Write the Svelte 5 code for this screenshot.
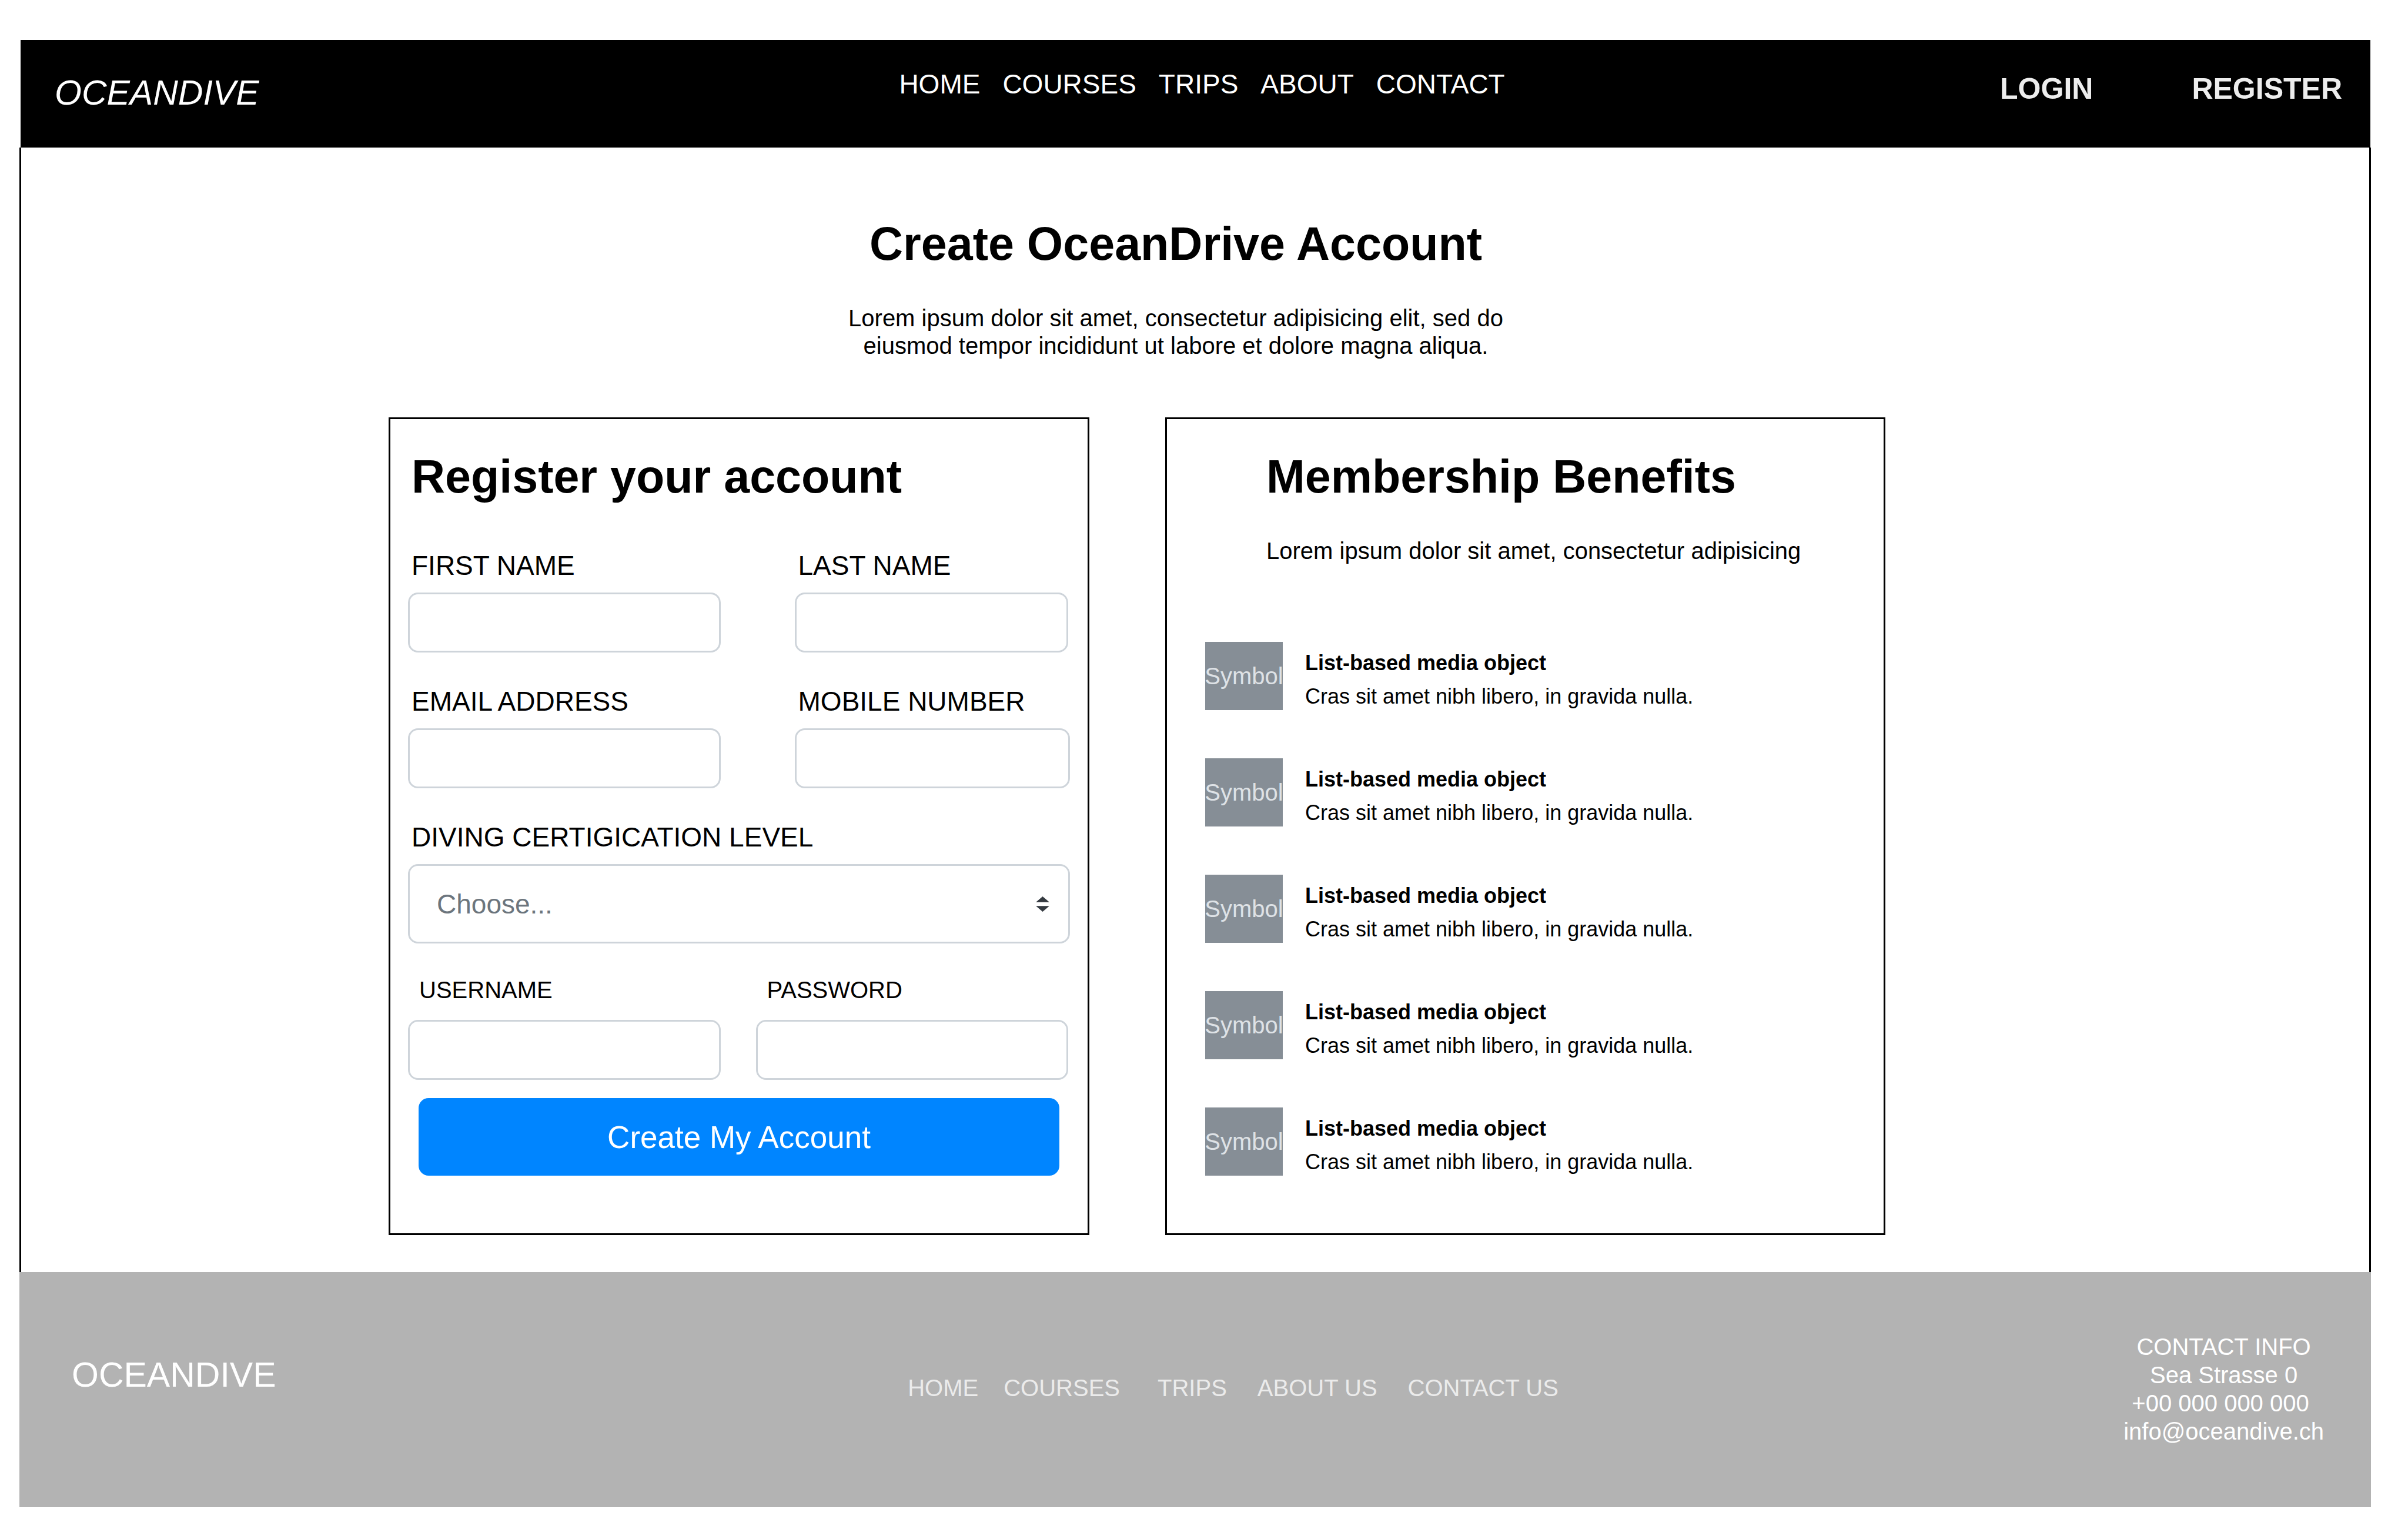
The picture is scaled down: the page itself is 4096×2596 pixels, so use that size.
<script>
  const mainLinks = ['HOME', 'COURSES', 'TRIPS', 'ABOUT', 'CONTACT'];
  const footerLinks = ['HOME', 'COURSES', 'TRIPS', 'ABOUT US', 'CONTACT US'];
  const benefits = Array.from({ length: 5 }, (_, id) => ({
    id,
    title: 'List-based media object',
    text: 'Cras sit amet nibh libero, in gravida nulla.'
  }));
</script>

<div class="page">
  <header class="header">
    <a class="logo logo-italic" href="#home">OCEANDIVE</a>
    <nav class="main-nav" aria-label="Main">
      {#each mainLinks as link}
        <a href="#{link.toLowerCase()}">{link}</a>
      {/each}
    </nav>
    <div class="auth">
      <a href="#login">LOGIN</a>
      <a href="#register">REGISTER</a>
    </div>
  </header>

  <main class="main">
    <section class="hero">
      <h1>Create OceanDrive Account</h1>
      <p>Lorem ipsum dolor sit amet, consectetur adipisicing elit, sed do eiusmod tempor incididunt ut labore et dolore magna aliqua.</p>
    </section>

    <div class="cards">
      <section class="card register" id="register">
        <h2>Register your account</h2>
        <form onsubmit={(event) => event.preventDefault()}>
          <div class="row row-name">
            <div class="field">
              <label for="first-name">FIRST NAME</label>
              <input id="first-name" type="text" />
            </div>
            <div class="field">
              <label for="last-name">LAST NAME</label>
              <input id="last-name" type="text" />
            </div>
          </div>
          <div class="row row-contact">
            <div class="field">
              <label for="email">EMAIL ADDRESS</label>
              <input id="email" type="email" />
            </div>
            <div class="field">
              <label for="mobile">MOBILE NUMBER</label>
              <input id="mobile" type="tel" />
            </div>
          </div>
          <div class="field">
            <label for="level">DIVING CERTIGICATION LEVEL</label>
            <div class="select">
              <select id="level">
                <option>Choose...</option>
              </select>
              <svg viewBox="0 0 28 32" aria-hidden="true">
                <path d="M0 12 14 0 28 12ZM0 20H28L14 32Z" />
              </svg>
            </div>
          </div>
          <div class="row row-login">
            <div class="field compact">
              <label for="username">USERNAME</label>
              <input id="username" type="text" />
            </div>
            <div class="field compact">
              <label for="password">PASSWORD</label>
              <input id="password" type="password" />
            </div>
          </div>
          <button type="submit">Create My Account</button>
        </form>
      </section>

      <section class="card benefits">
        <div class="intro">
          <h2>Membership Benefits</h2>
          <p>Lorem ipsum dolor sit amet, consectetur adipisicing</p>
        </div>
        <ul>
          {#each benefits as benefit (benefit.id)}
            <li>
              <div class="symbol">Symbol</div>
              <div class="body">
                <h3>{benefit.title}</h3>
                <p>{benefit.text}</p>
              </div>
            </li>
          {/each}
        </ul>
      </section>
    </div>
  </main>

  <footer class="footer">
    <a class="logo" href="#home">OCEANDIVE</a>
    <nav class="footer-nav" aria-label="Footer">
      {#each footerLinks as link}
        <a href="#{link.toLowerCase().replace(' ', '-')}">{link}</a>
      {/each}
    </nav>
    <address>
      <span>CONTACT INFO</span>
      <span>Sea Strasse 0</span>
      <span>+00 000 000 000&nbsp;</span>
      <a href="mailto:info@oceandive.ch">info@oceandive.ch</a>
    </address>
  </footer>
</div>

<style>
  :global(body) {
    margin: 0;
    background: #fff;
  }

  .page,
  .page * {
    box-sizing: border-box;
  }

  .page {
    padding: 68px 63px 33px 33px;
    font-family: 'Liberation Sans', Arial, sans-serif;
    font-size: 40px;
    line-height: 47px;
    color: #000;
  }

  h1,
  h2,
  h3,
  p,
  ul {
    margin: 0;
    padding: 0;
    font-size: inherit;
  }

  a {
    color: inherit;
    text-decoration: none;
    white-space: nowrap;
  }

  h1,
  h2 {
    font-size: 79px;
    line-height: 90px;
  }

  .logo {
    font-size: 59px;
    line-height: 68px;
  }

  .logo-italic {
    font-style: italic;
  }

  /* Header */
  .header {
    display: grid;
    grid-template-columns: 1489fr auto 1467fr;
    align-items: start;
    min-height: 183px;
    margin: 0 1px 0 2px;
    background: #000;
    color: #fff;
  }

  .header .logo {
    padding: 56px 0 0 58px;
  }

  .main-nav {
    display: flex;
    gap: 38px;
    padding-top: 48px;
    font-size: 46px;
    line-height: 54px;
  }

  .auth {
    display: flex;
    justify-content: flex-end;
    gap: 168px;
    padding: 54px 48px 0 0;
    font-size: 50px;
    line-height: 58px;
    font-weight: bold;
    color: #ededed;
  }

  /* Main */
  .main {
    padding: 119px 0 63px;
    border: solid #000;
    border-width: 0 3px;
  }

  .hero {
    display: flex;
    flex-direction: column;
    align-items: center;
    gap: 58px;
    padding-right: 66px;
    text-align: center;
  }

  .hero p {
    max-width: 1160px;
  }

  .cards {
    display: grid;
    grid-template-columns: 1192fr 1225fr;
    gap: 129px;
    margin-top: 98px;
    padding: 0 823px 0 625px;
  }

  .card {
    padding: 53px 30px 98px;
    border: 3px solid #000;
  }

  /* Registration form */
  .register h2 {
    padding-left: 6px;
  }

  form {
    display: flex;
    flex-direction: column;
    gap: 56px;
    margin-top: 79px;
  }

  .row {
    display: grid;
    column-gap: 126px;
  }

  .row-name {
    grid-template-columns: 531fr 465fr;
    padding-right: 3px;
  }

  .row-contact {
    grid-template-columns: 531fr 468fr;
  }

  .row-login {
    grid-template-columns: 1fr 1fr;
    column-gap: 60px;
    padding-right: 3px;
  }

  .field {
    display: flex;
    flex-direction: column;
    gap: 19px;
    min-width: 0;
    font-size: 46px;
    line-height: 54px;
  }

  .field label {
    padding-left: 6px;
  }

  .compact {
    gap: 27px;
    font-size: 40px;
    line-height: 47px;
  }

  .compact label {
    padding-left: 19px;
  }

  input,
  select {
    width: 100%;
    height: 102px;
    margin: 0;
    padding: 0 46px;
    border: 3px solid #ced4da;
    border-radius: 17px;
    background: #fff;
    font: inherit;
    color: #6c757d;
  }

  .select {
    display: grid;
    align-items: center;
  }

  select {
    grid-area: 1 / 1;
    height: 135px;
    appearance: none;
  }

  .select svg {
    grid-area: 1 / 1;
    justify-self: end;
    width: 23px;
    height: 26px;
    margin-right: 35px;
    fill: #343a40;
    pointer-events: none;
  }

  button {
    height: 132px;
    margin: -25px 18px 0;
    border: 0;
    border-radius: 17px;
    background: #0085ff;
    color: #fff;
    font: inherit;
    font-size: 53px;
  }

  /* Benefits */
  .intro {
    display: flex;
    flex-direction: column;
    gap: 58px;
    padding-left: 139px;
  }

  .benefits ul {
    display: flex;
    flex-direction: column;
    gap: 82px;
    margin-top: 131px;
    padding-left: 35px;
    list-style: none;
  }

  .benefits li {
    display: flex;
    gap: 38px;
  }

  .symbol {
    display: flex;
    flex: none;
    align-items: center;
    justify-content: center;
    width: 132px;
    height: 116px;
    background: #868e96;
    color: #dee2e6;
  }

  .body {
    display: flex;
    flex-direction: column;
    gap: 14px;
    padding-top: 14px;
    font-size: 36px;
    line-height: 43px;
  }

  /* Footer */
  .footer {
    display: grid;
    grid-template-columns: 1510fr auto 1381fr;
    align-items: start;
    min-height: 400px;
    background: #b3b3b3;
    color: #fff;
  }

  .footer .logo {
    padding: 141px 0 0 89px;
  }

  .footer-nav {
    display: flex;
    padding-top: 174px;
    color: #ebebeb;
  }

  .footer-nav a + a {
    margin-left: 52px;
  }

  .footer-nav a:nth-child(2) {
    margin-left: 43px;
  }

  .footer-nav a:nth-child(3) {
    margin-left: 64px;
  }

  address {
    display: flex;
    flex-direction: column;
    align-items: center;
    justify-self: end;
    gap: 1px;
    padding: 104px 80px 0 0;
    font-style: normal;
  }
</style>
